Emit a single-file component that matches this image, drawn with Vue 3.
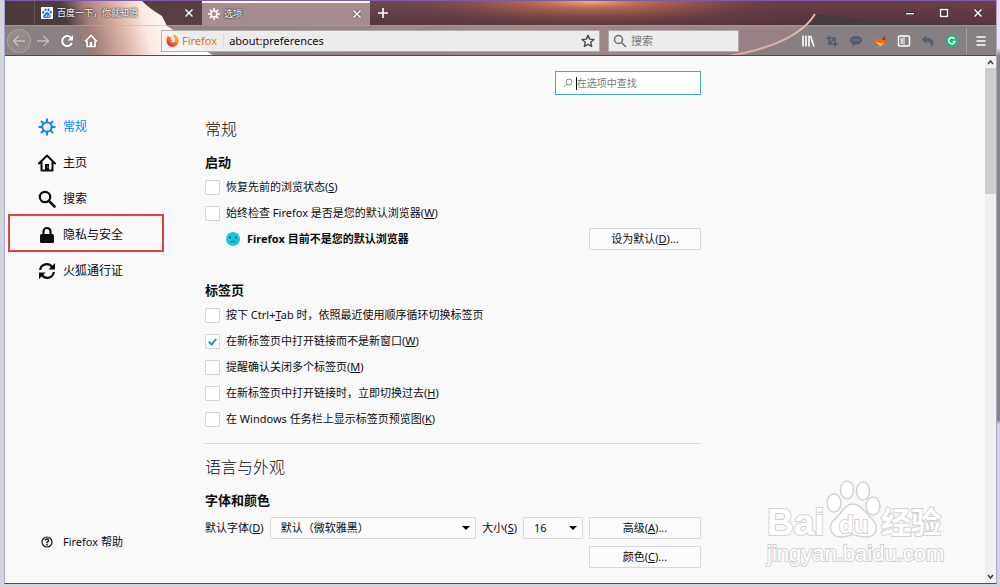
<script setup>
import { ref } from "vue";

const navItems = [
  { id: "general", label: "常规" },
  { id: "home", label: "主页" },
  { id: "search", label: "搜索" },
  { id: "privacy", label: "隐私与安全" },
  { id: "sync", label: "火狐通行证" },
];
const current = ref("general");

const startup = ref([
  { text: "恢复先前的浏览状态(", key: "S", rest: ")", on: false },
  { text: "始终检查 Firefox 是否是您的默认浏览器(", key: "W", rest: ")", on: false },
]);

const tabOptions = ref([
  {
    text: "按下 Ctrl+",
    key: "T",
    rest: "ab 时，依照最近使用顺序循环切换标签页",
    on: false,
  },
  { text: "在新标签页中打开链接而不是新窗口(", key: "W", rest: ")", on: true },
  { text: "提醒确认关闭多个标签页(", key: "M", rest: ")", on: false },
  { text: "在新标签页中打开链接时，立即切换过去(", key: "H", rest: ")", on: false },
  { text: "在 Windows 任务栏上显示标签页预览图(", key: "K", rest: ")", on: false },
]);

const url = ref("about:preferences");
const query = ref("");
const filter = ref("");
</script>

<template>
  <div class="desktop">
    <div class="window">
      <header class="chrome">
        <svg class="theme" viewBox="0 0 991 55" preserveAspectRatio="none" aria-hidden="true">
          <defs>
            <linearGradient id="sky" x1="0" x2="1" y1="0" y2="0">
              <stop offset="0" stop-color="#4b3a3c" />
              <stop offset="0.25" stop-color="#5c4045" />
              <stop offset="0.4" stop-color="#704a50" />
              <stop offset="0.6" stop-color="#80504f" />
              <stop offset="0.8" stop-color="#693f48" />
              <stop offset="1" stop-color="#6e4149" />
            </linearGradient>
            <radialGradient id="sun">
              <stop offset="0" stop-color="#ffb070" />
              <stop offset="0.25" stop-color="#e07c5c" stop-opacity="0.8" />
              <stop offset="1" stop-color="#9a5650" stop-opacity="0" />
            </radialGradient>
            <linearGradient id="dusk" x1="0" x2="0" y1="0" y2="1">
              <stop offset="0" stop-color="#3a2430" stop-opacity="0" />
              <stop offset="1" stop-color="#3a2430" stop-opacity="0.5" />
            </linearGradient>
            <linearGradient id="glow" gradientUnits="userSpaceOnUse" x1="66" x2="172" y1="42" y2="14">
              <stop offset="0" stop-color="#8d7473" stop-opacity="0" />
              <stop offset="0.2" stop-color="#a37d79" />
              <stop offset="0.45" stop-color="#d8aea2" />
              <stop offset="0.7" stop-color="#fbeae4" />
              <stop offset="1" stop-color="#ffffff" />
            </linearGradient>
            <linearGradient id="rim" x1="0" x2="1" y1="1" y2="0">
              <stop offset="0" stop-color="#e08b7c" />
              <stop offset="1" stop-color="#f0b5a6" />
            </linearGradient>
          </defs>
          <rect width="991" height="55" fill="url(#sky)" />
          <ellipse cx="585" cy="1" rx="170" ry="24" fill="url(#sun)" />
          <rect x="365" width="626" height="25" fill="url(#dusk)" />
          <path d="M270 55Q330 30 400 29L440 24L505 40L560 27L650 24L720 28L808 30L808 55Z" fill="#4d3440" opacity="0.35" />
          <path d="M808 13Q880 22 991 23V55H735Q795 42 808 13Z" fill="#453a3e" />
          <path d="M724 55Q792 43 810 13" fill="none" stroke="url(#rim)" stroke-width="2" />
          <rect y="24" width="991" height="31" fill="#cecccc" opacity="0.48" />
          <path d="M50 0H137Q145 8 157 15L162 25L209 55H85Q68 30 50 0Z" fill="url(#glow)" />
        </svg>

        <div class="tab-bar">
          <div class="tab">
            <button class="tab-title">
              <svg viewBox="0 0 12 12" width="12" height="12">
                <rect width="12" height="12" fill="#fff" />
                <g fill="#2b6fe0">
                  <ellipse cx="2.2" cy="5.4" rx="1.1" ry="1.4" />
                  <ellipse cx="4.5" cy="2.7" rx="1.1" ry="1.5" />
                  <ellipse cx="7.5" cy="2.7" rx="1.1" ry="1.5" />
                  <ellipse cx="9.8" cy="5.2" rx="1.1" ry="1.4" />
                  <path d="M6 5C4.6 5 4.2 6.600 3 7.500C1.700 8.600 2.200 11 4 11C5 11 5.300 10.700 6 10.700S7 11 8 11C9.900 11 10.300 8.800 9.100 7.600C7.900 6.500 7.400 5 6 5Z" />
                </g>
                <path d="M4.500 8.500v1h1v-2M7 7.800v1.700h1.200V7.800" fill="none" stroke="#fff" stroke-width="0.6" />
              </svg>
              <span>百度一下，你就知道</span>
            </button>
            <button class="tab-close" aria-label="关闭标签页">
              <svg viewBox="0 0 10 10" width="10" height="10"><path d="M1.500 1.500l7 7M8.500 1.500l-7 7" stroke="#fff" stroke-width="1.400" /></svg>
            </button>
          </div>
          <div class="tab active">
            <button class="tab-title">
              <svg viewBox="0 0 16 16" width="12" height="12" fill="none" stroke="#fff">
                <circle cx="8" cy="8" r="3.900" stroke-width="2" />
                <path d="M8 0v3.500M8 12.500V16M0 8h3.500M12.500 8H16M2.300 2.300l2.500 2.500M11.200 11.200l2.500 2.500M2.300 13.700l2.500-2.500M11.200 4.800l2.500-2.500" stroke-width="2" />
              </svg>
              <span>选项</span>
            </button>
            <button class="tab-close" aria-label="关闭标签页">
              <svg viewBox="0 0 10 10" width="10" height="10"><path d="M1.500 1.500l7 7M8.500 1.500l-7 7" stroke="#fff" stroke-width="1.400" /></svg>
            </button>
          </div>
          <button class="new-tab" aria-label="新建标签页">
            <svg viewBox="0 0 12 12" width="12" height="12"><path d="M6 1v10M1 6h10" stroke="#fff" stroke-width="1.600" /></svg>
          </button>
          <div class="window-buttons">
            <button aria-label="最小化">
              <svg viewBox="0 0 12 12" width="12" height="12"><path d="M1 5h10v3H1z" fill="#33272b" /><path d="M2 6h8v1.400H2z" fill="#fff" /></svg>
            </button>
            <button aria-label="最大化">
              <svg viewBox="0 0 12 12" width="12" height="12" fill="none"><path d="M2.500 2.500h7v7h-7z" stroke="#33272b" stroke-width="3.500" /><path d="M2.500 2.500h7v7h-7z" stroke="#fff" stroke-width="1.500" /></svg>
            </button>
            <button aria-label="关闭">
              <svg viewBox="0 0 12 12" width="12" height="12"><path d="M2.500 2.500l7 7M9.500 2.500l-7 7" stroke="#33272b" stroke-width="3" /><path d="M2.500 2.500l7 7M9.500 2.500l-7 7" stroke="#fff" stroke-width="1.500" /></svg>
            </button>
          </div>
        </div>

        <div class="toolbar">
          <div class="nav-buttons">
            <button class="back" aria-label="后退">
              <svg viewBox="0 0 14 14" width="14" height="14"><path d="M13 7H2M6.500 2L1.500 7l5 5" /></svg>
            </button>
            <button class="forward" aria-label="前进">
              <svg viewBox="0 0 14 14" width="14" height="14"><path d="M1 7h11M7.500 2l5 5-5 5" /></svg>
            </button>
            <button aria-label="刷新">
              <svg viewBox="0 0 14 14" width="14" height="14"><path d="M11.500 4.500A5 5 0 1 0 11.800 9" stroke-width="2" /><path d="M13 1v5.500H7.500z" fill="#fff" stroke="none" /></svg>
            </button>
            <button aria-label="主页">
              <svg viewBox="0 0 14 14" width="14" height="14"><path d="M1 7.500L7 1.500l6 6M3 6.500V12.500h8V6.500" stroke-width="1.700" /><path d="M5.800 8h2.400v4.500H5.800z" fill="#fff" stroke="none" /></svg>
            </button>
          </div>
          <div class="url-bar">
            <svg viewBox="0 0 16 16" width="13" height="13">
              <defs>
                <linearGradient id="fox" x1="1" x2="0.200" y1="0" y2="1">
                  <stop offset="0" stop-color="#ffd42a" />
                  <stop offset="0.500" stop-color="#ff7a1a" />
                  <stop offset="1" stop-color="#e2204e" />
                </linearGradient>
              </defs>
              <path d="M1 5L2.500 1.500L4 4Q6 3 7.500 4Q5.500 5 6 6.500L8 8L5.500 9Q7 11 9.500 10.500Q12 9.500 11.500 7Q11 4 9 2.500Q10 .5 9.500 0Q15.500 3 15.500 8.500A7.500 7.500 0 0 1 .5 8.500Q.5 6.500 1 5Z" fill="url(#fox)" />
            </svg>
            <span class="identity">Firefox</span>
            <input v-model="url" type="text" aria-label="地址" />
            <button class="bookmark" aria-label="添加书签">
              <svg viewBox="0 0 14 14" width="14" height="14"><path d="M7 1.200l1.700 3.900 4.200.4-3.200 2.800 1 4.200L7 10.300l-3.700 2.200 1-4.200L1.100 5.500l4.200-.4z" fill="none" stroke="#4a4a4a" stroke-width="1.400" stroke-linejoin="round" /></svg>
            </button>
          </div>
          <label class="search-bar">
            <svg viewBox="0 0 14 14" width="14" height="14" fill="none" stroke="#6f6a6a" stroke-width="1.500"><circle cx="5.500" cy="5.500" r="4" /><path d="M8.500 8.500l4.500 4.500" /></svg>
            <input v-model="query" type="text" placeholder="搜索" />
          </label>
          <div class="tools">
            <button aria-label="我的足迹">
              <svg viewBox="0 0 14 14" width="14" height="14" stroke="#fff" stroke-width="1.600"><path d="M2 1.500v11M5 1.500v11M8 1.500v11M9.500 2l3.500 10.500" /></svg>
            </button>
            <button aria-label="截图">
              <svg viewBox="0 0 14 14" width="14" height="14" fill="none" stroke="#4f5e70" stroke-width="1.700"><path d="M4 1.500v8.500h9M1 4h9v8.500M4 10L10 4" /></svg>
            </button>
            <button aria-label="聊天">
              <svg viewBox="0 0 14 14" width="14" height="14"><path d="M7 2C3.500 2 1 3.800 1 6.200C1 7.800 2 9 3.700 9.800L3 12.500L6.500 10.500C10.500 10.500 13 8.700 13 6.200S10.500 2 7 2Z" fill="#4f5e70" /><path d="M4 6h1M6.500 6h1M9 6h1" stroke="#a9b3bd" /></svg>
            </button>
            <button aria-label="火狐助手">
              <svg viewBox="0 0 14 14" width="14" height="14"><path d="M1 4l3.500 1.500L7 5l2 .5L11.500 1l1 5.500L11 10l-4 2-4-2.500-1-2z" fill="#f26a1b" /><path d="M3 8l3 .5 2 1.500 2.500-2L9 11l-2 1z" fill="#ffd23a" /><path d="M9.500 5.500l2-3 .3 3.500zM5 7l1.500.7" fill="#d92a1c" stroke="#a31616" stroke-width="0.600" /></svg>
            </button>
            <button aria-label="侧栏">
              <svg viewBox="0 0 14 14" width="14" height="14"><rect x="1.500" y="2" width="11" height="10" rx="1.500" fill="none" stroke="#fff" stroke-width="1.500" /><path d="M3.500 4h2.500v6H3.500z" fill="#d6d2d2" /><path d="M7 3v8" stroke="#fff" /></svg>
            </button>
            <button aria-label="撤销">
              <svg viewBox="0 0 14 14" width="14" height="14"><path d="M1 5.500L5.500 1.500V4Q12.500 4 12.500 9Q12.500 11.500 10 13Q11 8 5.500 7.500V10Z" fill="#4f5e70" /></svg>
            </button>
            <button aria-label="Grammarly">
              <svg viewBox="0 0 14 14" width="14" height="14"><circle cx="7" cy="7" r="6" fill="#15bf74" /><path d="M9.500 4.800A3.200 3.200 0 1 0 10 7.500H7.700" fill="none" stroke="#fff" stroke-width="1.400" /></svg>
            </button>
            <button class="menu" aria-label="打开菜单">
              <svg viewBox="0 0 14 14" width="14" height="14" stroke="#fff" stroke-width="1.700"><path d="M2.500 3h9M2.500 7h9M2.500 11h9" /></svg>
            </button>
          </div>
        </div>
      </header>

      <div class="page">
        <nav class="sidebar">
          <a
            v-for="item in navItems"
            :key="item.id"
            :href="'#' + item.id"
            :class="{ selected: current === item.id, marked: item.id === 'privacy' }"
            @click.prevent="current = item.id"
          >
            <svg viewBox="0 0 18 18" width="18" height="18">
              <g v-if="item.id === 'general'" fill="none" stroke="currentColor" stroke-width="2">
                <circle cx="9" cy="9" r="4.700" />
                <path d="M9 .5v3.500M9 14v3.500M.5 9H4M14 9h3.500M3 3l2.500 2.500M12.500 12.500L15 15M3 15l2.500-2.500M12.500 5.500L15 3" />
              </g>
              <g v-else-if="item.id === 'home'">
                <path d="M1 9.500L9 1.500l8 8M3.500 8v8.500h11V8" fill="none" stroke="currentColor" stroke-width="2" stroke-linecap="round" stroke-linejoin="round" />
                <path d="M7 16.500V10h4v6.500z" fill="currentColor" />
                <path d="M9.300 12.500h1v1h-1z" fill="#f9f9fa" />
              </g>
              <g v-else-if="item.id === 'search'" fill="none" stroke="currentColor">
                <circle cx="7" cy="7" r="5.200" stroke-width="2.200" />
                <path d="M10.800 10.800l5.700 5.700" stroke-width="2.600" stroke-linecap="round" />
              </g>
              <g v-else-if="item.id === 'privacy'">
                <rect x="2" y="8" width="14" height="9" rx="1.500" fill="currentColor" />
                <path d="M5.500 9V5.500a3.500 3.500 0 0 1 7 0V9" fill="none" stroke="currentColor" stroke-width="2.200" />
              </g>
              <g v-else>
                <path d="M2.200 8A6.500 6.500 0 0 1 14 5M15.800 10A6.500 6.500 0 0 1 4 13" fill="none" stroke="currentColor" stroke-width="2.200" />
                <path d="M17 1v6.500h-6.500zM1 17v-6.500h6.500z" fill="currentColor" />
              </g>
            </svg>
            <span>{{ item.label }}</span>
          </a>
          <a class="help" href="#help">
            <svg viewBox="0 0 18 18" width="18" height="18" fill="none" stroke="currentColor">
              <circle cx="9" cy="9" r="5" stroke-width="1.200" />
              <path d="M7.300 7.600Q7.300 6.100 9 6.100T10.700 7.600Q10.700 8.700 9 9.200V10.200M9 11v1.500" stroke-width="1.500" />
            </svg>
            <span>Firefox 帮助</span>
          </a>
        </nav>

        <main>
          <label class="filter">
            <svg viewBox="0 0 10 10" width="10" height="10" fill="none" stroke="#8a8a8a"><circle cx="6" cy="4" r="3" /><path d="M3.800 6.200L1 9" /></svg>
            <span class="caret"></span>
            <input v-model="filter" type="text" placeholder="在选项中查找" />
          </label>

          <h1>常规</h1>
          <h2>启动</h2>
          <div class="options">
            <label v-for="option in startup" :key="option.text">
              <input v-model="option.on" type="checkbox" />
              <span>{{ option.text }}<u>{{ option.key }}</u>{{ option.rest }}</span>
            </label>
          </div>
          <div class="default-browser">
            <svg viewBox="0 0 14 14" width="14" height="14">
              <circle cx="7" cy="7" r="7" fill="#15c8dc" />
              <path d="M4 4.500v2M10 4.500v2" stroke="#0b4f63" stroke-width="1.500" />
              <path d="M4.500 10l2.500-1 2.500 1" fill="none" stroke="#0b4f63" />
            </svg>
            <strong>Firefox 目前不是您的默认浏览器</strong>
            <button class="push">设为默认(<u>D</u>)...</button>
          </div>

          <h2 class="spaced">标签页</h2>
          <div class="options">
            <label v-for="option in tabOptions" :key="option.text">
              <input v-model="option.on" type="checkbox" />
              <span>{{ option.text }}<u>{{ option.key }}</u>{{ option.rest }}</span>
            </label>
          </div>

          <hr />
          <h1 class="section">语言与外观</h1>
          <h2>字体和颜色</h2>
          <div class="fonts">
            <label for="font">默认字体(<u>D</u>)</label>
            <div class="drop font-drop">
              <select id="font">
                <option>默认（微软雅黑）</option>
              </select>
              <svg viewBox="0 0 8 4" width="8" height="4"><path d="M0 0h8L4 4z" /></svg>
            </div>
            <label for="size">大小(<u>S</u>)</label>
            <div class="drop size-drop">
              <select id="size">
                <option>16</option>
              </select>
              <svg viewBox="0 0 8 4" width="8" height="4"><path d="M0 0h8L4 4z" /></svg>
            </div>
            <button class="push">高级(<u>A</u>)...</button>
          </div>
          <div class="fonts colors">
            <button class="push">颜色(<u>C</u>)...</button>
          </div>
        </main>

        <div class="scrollbar">
          <svg viewBox="0 0 11 12" width="11" height="12"><path d="M3 8l2.500-3L8 8" /></svg>
          <div class="thumb"></div>
          <svg viewBox="0 0 11 12" width="11" height="12"><path d="M3 4l2.500 3L8 4" /></svg>
        </div>

        <svg class="watermark" viewBox="0 0 186 92" width="186" height="92">
          <g fill="#fff" stroke="#d2d2d2" stroke-width="1.500">
            <ellipse cx="70" cy="26" rx="7" ry="9" />
            <ellipse cx="83" cy="13" rx="6.500" ry="9" />
            <ellipse cx="99" cy="14" rx="6.500" ry="9" />
            <ellipse cx="109" cy="29" rx="7" ry="9" />
            <path d="M89 27C81 27 78 36 71 42C62 50 68 60 77 60C82 60 85 58 89 58S97 60 102 60C112 60 116 50 108 42C100 35 97 27 89 27Z" />
          </g>
          <g class="mark-text">
            <text x="3" y="58" font-size="37">Bai</text>
            <text x="75" y="56" font-size="24">du</text>
            <text x="117" y="56" font-size="30">经验</text>
            <text class="domain" x="3" y="84" font-size="22">jingyan.baidu.com</text>
          </g>
        </svg>
      </div>
    </div>
  </div>
</template>

<style>
body {
  margin: 0;
  overflow: hidden;
}
</style>

<style scoped>
.desktop {
  box-sizing: border-box;
  height: 100vh;
  padding: 0 3px 3px 4px;
  background: linear-gradient(#e6e6ee 48px, #8b8670 56px, #8b8670 420px, #d4d4d6 424px) right / 4px 100% no-repeat,
    #d5d5dc;
  font-family: "Noto Sans", "Noto Sans CJK SC", sans-serif;
  font-size: 11px;
  line-height: 16px;
  color: #0c0c0d;
}
.window {
  box-sizing: border-box;
  display: flex;
  flex-direction: column;
  height: 100%;
  border: 1px solid #aaa4d4;
  border-top-color: #7d5ba6;
  border-bottom-color: #4b487c;
}
svg {
  flex: none;
}
button {
  display: flex;
  align-items: center;
  justify-content: center;
  padding: 0;
  border: 0;
  background: none;
  color: inherit;
  font: inherit;
}
input {
  min-width: 0;
  padding: 0;
  border: 0;
  outline: 0;
  background: none;
  color: inherit;
  font: inherit;
}
.chrome {
  position: relative;
  flex: none;
}
.theme {
  position: absolute;
  width: 100%;
  height: 100%;
}
.tab-bar {
  position: relative;
  display: flex;
  height: 24px;
  padding-left: 29px;
}
.tab {
  box-sizing: border-box;
  display: flex;
  justify-content: space-between;
  width: 168px;
  padding: 0 8px 0 6px;
  border-left: 1px solid rgba(255, 255, 255, 0.15);
}
.tab.active {
  border-top: 2px solid #fff;
  border-left: 0;
  background: #a58d92;
}
.tab-title {
  gap: 4px;
  color: #fff;
  font-size: 9px;
  text-shadow: 0 0 2px #222, 0 0 2px #222;
}
.tab-close svg {
  filter: drop-shadow(0 0 1px #444);
}
.new-tab {
  width: 26px;
}
.window-buttons {
  display: flex;
  gap: 22px;
  margin-left: auto;
  padding-right: 12px;
}
.toolbar {
  position: relative;
  box-sizing: border-box;
  display: flex;
  align-items: center;
  height: 31px;
  padding-right: 2px;
  border-top: 1px solid rgba(190, 170, 175, 0.5);
  border-bottom: 1px solid #55484b;
}
.nav-buttons {
  display: flex;
  align-items: center;
  width: 156px;
  padding-left: 2px;
  box-sizing: border-box;
}
.nav-buttons button {
  width: 24px;
  height: 24px;
}
.nav-buttons svg {
  fill: none;
  stroke: #fff;
  stroke-width: 1.4;
  filter: drop-shadow(0 0 1px #777);
}
.nav-buttons .back {
  box-sizing: border-box;
  border: 1px solid rgba(255, 255, 255, 0.2);
  border-radius: 50%;
  background: rgba(255, 255, 255, 0.08);
}
.back svg,
.forward svg {
  opacity: 0.5;
}
.url-bar,
.search-bar {
  box-sizing: border-box;
  display: flex;
  align-items: center;
  height: 22px;
  border: 1px solid rgba(120, 105, 105, 0.5);
  background: rgba(242, 242, 242, 0.94);
}
.url-bar {
  flex: 1;
  padding: 0 4px;
}
.identity {
  margin: 0 5px 0 3px;
  padding-right: 6px;
  border-right: 1px solid #dedede;
  color: #d9791a;
}
.url-bar input {
  flex: 1;
}
.search-bar {
  width: 131px;
  margin-left: 8px;
  padding: 0 4px;
  gap: 4px;
}
.search-bar input::placeholder {
  color: #777;
  opacity: 1;
}
.tools {
  display: flex;
  margin-left: 57px;
}
.tools button {
  width: 24px;
  height: 26px;
}
.tools .menu {
  width: 28px;
  margin-left: 2px;
  border-left: 1px solid rgba(255, 255, 255, 0.25);
}
.page {
  position: relative;
  display: flex;
  flex: 1;
  min-height: 0;
  background: #f9f9fa;
}
.sidebar {
  box-sizing: border-box;
  display: flex;
  flex-direction: column;
  width: 200px;
  padding: 53px 0 23px 3px;
}
.sidebar a {
  position: relative;
  display: flex;
  align-items: center;
  box-sizing: border-box;
  width: 156px;
  height: 36px;
  gap: 7px;
  padding-left: 30px;
  color: #0c0c0d;
  font-size: 12px;
  text-decoration: none;
}
.sidebar a.selected {
  color: #0a84ff;
}
.marked::after {
  content: "";
  position: absolute;
  inset: -3px 0 1px;
  border: 2px solid #e53e3e;
}
.sidebar a.help {
  margin-top: auto;
  font-size: 11px;
}
main {
  flex: 0 1 496px;
  overflow: hidden;
}
.filter {
  box-sizing: border-box;
  display: flex;
  align-items: center;
  width: 146px;
  height: 24px;
  margin: 15px 0 0 auto;
  padding: 0 7px;
  border: 1px solid #4a9fd8;
  background: #fff;
  font-size: 10px;
}
.filter input::placeholder {
  color: #777;
  opacity: 1;
}
.caret {
  width: 1px;
  height: 13px;
  margin-left: 3px;
  background: #000;
}
h1 {
  margin: 22px 0 0;
  font-size: 16px;
  font-weight: 300;
  line-height: 24px;
}
h1.section {
  margin-top: 11px;
}
h2 {
  margin: 11px 0 7px;
  font-size: 13px;
  font-weight: 700;
  line-height: 20px;
}
h2.spaced {
  margin-top: 30px;
}
.options {
  display: flex;
  flex-direction: column;
  align-items: flex-start;
  gap: 10px;
}
.options label {
  display: flex;
  align-items: center;
  gap: 6px;
}
.options input {
  appearance: none;
  box-sizing: border-box;
  display: flex;
  justify-content: center;
  width: 15px;
  height: 15px;
  margin: 0;
  border: 1px solid #d4d4d6;
  border-radius: 1px;
  background: #fff;
}
.options input:checked::after {
  content: "";
  width: 3px;
  height: 6px;
  margin-top: 2px;
  border: solid #2292d0;
  border-width: 0 2px 2px 0;
  transform: rotate(40deg);
}
.default-browser {
  display: flex;
  align-items: center;
  gap: 7px;
  margin-top: 7px;
  padding-left: 21px;
}
.push {
  box-sizing: border-box;
  width: 112px;
  height: 22px;
  margin-left: auto;
  border: 1px solid #d8d8da;
  border-radius: 1px;
  background: #fbfbfb;
}
hr {
  height: 1px;
  margin: 16px 0 0;
  border: 0;
  background: #d9d9db;
}
.fonts {
  display: flex;
  align-items: center;
  gap: 6px;
}
.colors {
  margin-top: 7px;
}
.drop {
  position: relative;
}
.font-drop {
  flex: 1;
}
.size-drop {
  width: 60px;
}
.drop select {
  appearance: none;
  box-sizing: border-box;
  display: block;
  width: 100%;
  height: 22px;
  padding: 0 10px;
  border: 1px solid #d8d8da;
  border-radius: 1px;
  background: #fbfbfb;
  color: inherit;
  font: inherit;
}
.drop svg {
  position: absolute;
  top: 9px;
  right: 6px;
}
.scrollbar {
  display: flex;
  flex-direction: column;
  width: 11px;
  margin-left: auto;
  background: #f0f0f0;
}
.scrollbar svg {
  flex: none;
  fill: none;
  stroke: #404040;
  stroke-width: 1.5;
}
.thumb {
  height: 24%;
  margin-bottom: auto;
  background: #cdcdcd;
}
.watermark {
  position: absolute;
  right: 46px;
  bottom: 14px;
}
.mark-text {
  fill: #fff;
  stroke: #d2d2d2;
  stroke-width: 2px;
  paint-order: stroke;
  font-family: "Liberation Sans", "Noto Sans CJK SC", sans-serif;
  font-weight: 700;
}
.domain {
  font-weight: 400;
}
</style>
